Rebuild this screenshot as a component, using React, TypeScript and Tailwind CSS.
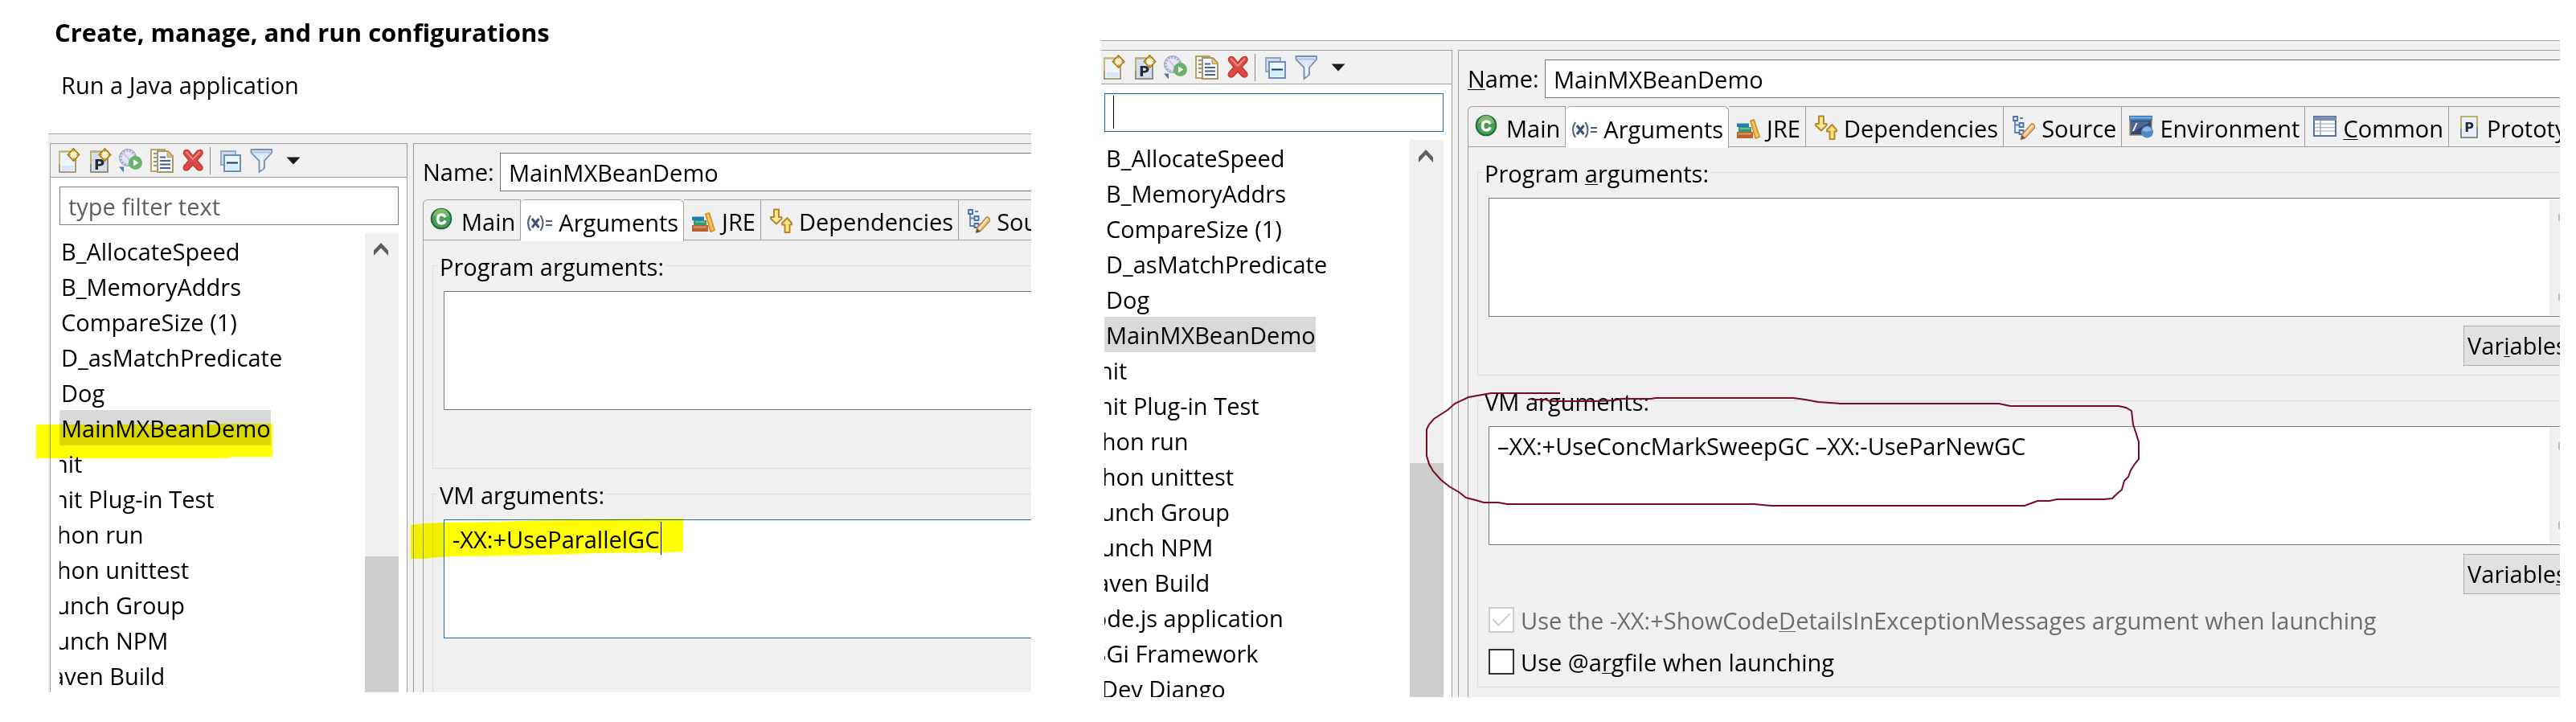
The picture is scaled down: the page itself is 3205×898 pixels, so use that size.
import React from "react";

/* ---------- toolbar icons ---------- */

type IconProps = { children: React.ReactNode };

function Icon({ children }: IconProps) {
  return (
    <svg viewBox="0 0 32 32" className="size-8 shrink-0" aria-hidden="true">
      {children}
    </svg>
  );
}

function Spark() {
  return (
    <g>
      <path d="M21.500 1 L28.500 8.500 L21.500 16 L14.500 8.500 Z" fill="#fdf3c8" stroke="#a67c12" strokeWidth="1.800" />
      <path d="M21.500 2 V15 M15.500 8.500 H27.500" stroke="#c99b2c" strokeWidth="1.600" />
      <path d="M21.500 5 V12 M18 8.500 H25" stroke="#fffbe6" strokeWidth="2.200" />
    </g>
  );
}

function NewIcon() {
  return (
    <Icon>
      <path d="M4 4.500 H24 V30 H4 Z" fill="#eef4fc" stroke="#a79d78" strokeWidth="2" />
      <path d="M4 4.500 V20 M4 4.500 H16" stroke="#cdbb79" strokeWidth="2" />
      <path d="M7 22 H22 V28 H7 Z" fill="#d8e6f8" />
      <Spark />
    </Icon>
  );
}

function PrototypeNewIcon() {
  return (
    <Icon>
      <path d="M4 4.500 H25 V30 H4 Z" fill="#d3deee" stroke="#948f78" strokeWidth="2" />
      <path d="M4 4.500 V20 M4 4.500 H16" stroke="#c2b172" strokeWidth="2" />
      <text x="8" y="27" fontFamily="DejaVu Sans, sans-serif" fontWeight="700" fontSize="18" fill="#26292e">P</text>
      <Spark />
    </Icon>
  );
}

function ExportIcon() {
  return (
    <Icon>
      <circle cx="11" cy="12" r="9" fill="#e6e4f2" stroke="#a9b5d2" strokeWidth="3.500" strokeDasharray="2.600 1.400" />
      <circle cx="11" cy="12" r="10.500" fill="none" stroke="#8fa2c8" strokeWidth="1" />
      <path d="M11 12 L6 7 M11 12 L15 20" stroke="#c8b9d6" strokeWidth="1.500" />
      <circle cx="20.500" cy="18.500" r="8.500" fill="#69b26c" />
      <path d="M18 14.500 L24.500 18.500 L18 22.500 Z" fill="#fff" />
      <path d="M0 23.500 H6 V30.500 Z" fill="#5878a8" />
    </Icon>
  );
}

function CopyIcon() {
  return (
    <Icon>
      <path d="M1 2 H18 V29 H1 Z" fill="#fbf6e0" stroke="#b6a468" strokeWidth="2" />
      <path d="M4 7 H8 M4 12 H8 M4 17 H8 M4 22 H8" stroke="#5b7295" strokeWidth="1.600" />
      <path d="M9 4 H22 L28 10.500 V30 H9 Z" fill="#f5f8fe" stroke="#a69668" strokeWidth="2" />
      <path d="M21 3.500 V11.500 H28.500 Z" fill="#e3c47a" stroke="#b79a55" strokeWidth="1" />
      <path d="M12 11.500 H19 M12 16 H25 M12 20.500 H25 M12 25 H25" stroke="#49628b" strokeWidth="1.800" />
    </Icon>
  );
}

function DeleteIcon() {
  return (
    <Icon>
      <path
        d="M4 3 Q7 1.500 9.500 4 L14 10 L19 4 Q22 1.500 25 3 Q27.500 6 25 9 L19 15.500 L25 22 Q27.500 25.500 24.500 27.500 Q21.500 29 19 26.500 L14 21 L9 26.500 Q6.500 29 3.500 27.500 Q1 25 3 22 L9 15.500 L3.500 9 Q1 5.500 4 3 Z"
        fill="#dc4a45"
        stroke="#c3312e"
        strokeWidth="1.200"
      />
      <path d="M5 4.500 L14 14 L23 4.500" fill="none" stroke="#ef8b84" strokeWidth="2" />
    </Icon>
  );
}

function CollapseIcon() {
  return (
    <Icon>
      <path d="M4 4 H22 V21 H4 Z" fill="#cfdcea" stroke="#8ea6c3" strokeWidth="1.800" />
      <path d="M8 9 H28 V29 H8 Z" fill="#eef7fe" stroke="#6e8fb5" strokeWidth="2" />
      <path d="M10 20 H26 V27 H10 Z" fill="#d5edfb" />
      <path d="M11 18.500 H25" stroke="#12385e" strokeWidth="2" />
    </Icon>
  );
}

function FilterIcon() {
  return (
    <Icon>
      <path d="M2.500 2 H28 V6 L19 16 V25 L12.500 30 V16 L2.500 6 Z" fill="#d7e9f8" stroke="#7790ae" strokeWidth="1.800" />
      <path d="M4 5.500 H26" stroke="#a9c6e2" strokeWidth="2" />
      <path d="M15.500 10 V27" stroke="#f6fbff" strokeWidth="2" />
    </Icon>
  );
}

function MenuArrowIcon() {
  return (
    <Icon>
      <path d="M7.500 11.500 H24.500 L16 20.500 Z" fill="#1c1c1c" />
    </Icon>
  );
}

/* ---------- tab icons ---------- */

function ClassIcon() {
  return (
    <Icon>
      <circle cx="15" cy="14" r="12.300" fill="#4b9c55" stroke="#1f6b39" strokeWidth="2" />
      <path d="M5 11.500 A10 10 0 0 1 25 11.500 Q15 8 5 11.500 Z" fill="#7bb86c" />
      <text x="15" y="20.500" textAnchor="middle" fontFamily="Liberation Sans, sans-serif" fontWeight="700" fontSize="18" fill="#fff" stroke="#fff" strokeWidth="1">C</text>
    </Icon>
  );
}

function ArgumentsIcon() {
  return (
    <Icon>
      <path d="M5 9 Q-1 18.500 5 28 M17.500 9 Q23.500 18.500 17.500 28" fill="none" stroke="#5a6580" strokeWidth="2.200" />
      <path d="M7 13 L15.500 24 M15.500 13 L7 24" stroke="#3c4f7a" strokeWidth="3" />
      <path d="M24 16 H32 M24 21 H32" stroke="#4d5a7c" strokeWidth="2" />
    </Icon>
  );
}

function LibraryIcon() {
  return (
    <Icon>
      <path d="M3 11.500 H18 V16 H3 Z" fill="#1f7fae" />
      <path d="M5 16 H21 V22 H5 Z" fill="#2f9c74" />
      <path d="M7 18 H19" stroke="#7cc9a4" strokeWidth="1.500" />
      <path d="M3 22 H23 V30 H3 Z" fill="#b9622f" />
      <path d="M5 24.500 H21" stroke="#dc9a68" strokeWidth="2" />
      <path d="M19.500 8 L24.500 6.500 L31.500 28.500 L26 30.500 Z" fill="#eda72f" stroke="#cf7f1c" strokeWidth="1" />
      <path d="M22.500 9 L28.500 28" stroke="#f8d276" strokeWidth="1.600" />
    </Icon>
  );
}

function DependenciesIcon() {
  return (
    <Icon>
      <path d="M9 2.500 H15 V12 H18.500 V14 L12 20.500 L5 14 V12 H9 Z" fill="#fbe795" stroke="#b8872a" strokeWidth="2" strokeLinejoin="round" />
      <path d="M22.500 31 H28.500 V21.500 H31 V19.500 L25.500 13 L19 19.500 V21.500 H22.500 Z" fill="#fbe27c" stroke="#b8872a" strokeWidth="2" strokeLinejoin="round" />
    </Icon>
  );
}

function SourceIcon() {
  return (
    <Icon>
      <path d="M7 8 V23 H12 M7 13.500 H12 M13 5 H17" fill="none" stroke="#5e80b4" strokeWidth="1.800" />
      <path d="M5 3 H10 V8 H5 Z M12.500 11 H17.500 V16 H12.500 Z M12.500 20 H17.500 V25 H12.500 Z" fill="#dfe9f7" stroke="#4a70aa" strokeWidth="1.800" />
      <path d="M28 11.500 Q32.500 13 31.500 17 L20.500 29 L14.500 31.500 L15.500 25.500 Z" fill="#f0b877" stroke="#b67b42" strokeWidth="1.200" />
      <path d="M28.500 14 L18 27" stroke="#fbe3bd" strokeWidth="2" />
      <path d="M15.500 26 L20 30 L14 31.500 Z" fill="#6d5648" />
    </Icon>
  );
}

function EnvironmentIcon() {
  return (
    <Icon>
      <path d="M3 2.500 H30 V26 H3 Z" fill="#2f4570" stroke="#a08e5c" strokeWidth="1.400" />
      <path d="M2 2 H31 V8 H2 Z" fill="#3f7fb9" />
      <path d="M3 4.500 H30" stroke="#86bce6" strokeWidth="1.600" />
      <path d="M4 9 H29 L4 24 Z" fill="#4d6796" />
      <path d="M11.500 11 L7 21" stroke="#fff" strokeWidth="1.800" />
      <circle cx="24.500" cy="22" r="7.500" fill="#4f8cc4" />
      <path d="M18 20 Q24.500 11 31 20 Q24.500 23 18 20 Z" fill="#8ab6de" />
    </Icon>
  );
}

function CommonIcon() {
  return (
    <Icon>
      <path d="M4 3 H31 V27 H4 Z" fill="#fbfcfe" stroke="#5d6f95" strokeWidth="2" />
      <path d="M4 3 H31 V8 H4 Z" fill="#7d8fb3" />
      <path d="M5 12 H30 M5 16.500 H30 M5 21 H30" stroke="#b9bec9" strokeWidth="1.600" />
      <path d="M12 8 V26" stroke="#9aa6bd" strokeWidth="1.400" />
    </Icon>
  );
}

function PrototypeIcon() {
  return (
    <Icon>
      <path d="M8 3 H28 V29 H8 Z" fill="#e9f0fb" stroke="#8e8f86" strokeWidth="2" />
      <path d="M8 18 V3 H28 V16" fill="none" stroke="#bfae6e" strokeWidth="2" />
      <text x="18" y="22" textAnchor="middle" fontFamily="DejaVu Sans, sans-serif" fontWeight="700" fontSize="16" fill="#26292e">P</text>
    </Icon>
  );
}

/* ---------- shared pieces ---------- */

/** Renders a caption whose mnemonic stands between two ampersands. */
function Mnemonic({ text, show }: { text: string; show: boolean }) {
  const [before, key, after] = text.split("&");
  return (
    <>
      {before}
      <span className={show ? "underline decoration-1 underline-offset-2" : ""}>{key}</span>
      {after}
    </>
  );
}

const launchItems = [
  { name: "B_AllocateSpeed", child: true },
  { name: "B_MemoryAddrs", child: true },
  { name: "CompareSize (1)", child: true },
  { name: "D_asMatchPredicate", child: true },
  { name: "Dog", child: true },
  { name: "MainMXBeanDemo", child: true, selected: true },
  { name: "JUnit" },
  { name: "JUnit Plug-in Test" },
  { name: "Jython run" },
  { name: "Jython unittest" },
  { name: "Launch Group" },
  { name: "Launch NPM" },
  { name: "Maven Build" },
  { name: "Node.js application" },
  { name: "OSGi Framework" },
  { name: "PyDev Django" },
];

const tools = [
  { label: "New launch configuration", icon: <NewIcon /> },
  { label: "New launch configuration prototype", icon: <PrototypeNewIcon /> },
  { label: "Export launch configuration", icon: <ExportIcon /> },
  { label: "Duplicate", icon: <CopyIcon /> },
  { label: "Delete", icon: <DeleteIcon /> },
];

const viewTools = [
  { label: "Collapse all", icon: <CollapseIcon /> },
  { label: "Filter", icon: <FilterIcon /> },
  { label: "Filter menu", icon: <MenuArrowIcon /> },
];

const tabs = [
  { text: "&&Main", icon: <ClassIcon /> },
  { text: "&&Arguments", icon: <ArgumentsIcon />, active: true },
  { text: "&&JRE", icon: <LibraryIcon /> },
  { text: "&&Dependencies", icon: <DependenciesIcon /> },
  { text: "&&Source", icon: <SourceIcon /> },
  { text: "&&Environment", icon: <EnvironmentIcon /> },
  { text: "&C&ommon", icon: <CommonIcon /> },
  { text: "&&Prototype", icon: <PrototypeIcon /> },
];

function ToolButton({ label, icon }: { label: string; icon: React.ReactNode }) {
  return (
    <button type="button" aria-label={label} className="size-8">
      {icon}
    </button>
  );
}

function LaunchList({ searching }: { searching: boolean }) {
  return (
    <section
      className={`flex w-[445px] shrink-0 flex-col border border-b-0 border-[#a0a0a0] ${searching ? "-ml-2" : "ml-0.5"}`}
    >
      <div className="flex h-[42px] shrink-0 items-center border-b border-[#a0a0a0] pl-[7px]">
        <div className="flex gap-[7px]">
          {tools.map((t) => (
            <ToolButton key={t.label} {...t} />
          ))}
        </div>
        <div className="ml-[3px] h-[34px] w-px bg-[#8a8a8a]" />
        <div className="ml-[9px] flex gap-[7px]">
          {viewTools.map((t) => (
            <ToolButton key={t.label} {...t} />
          ))}
        </div>
      </div>
      <div className="flex grow flex-col gap-2.5 bg-white pt-[11px] pr-2.5 pl-[11px]">
        <div className="relative shrink-0">
          <input
            type="text"
            aria-label="Filter launch configurations"
            placeholder={searching ? "" : "type filter text"}
            className={`block h-12 w-full border bg-white px-2.5 placeholder:text-[#5f5f5f] ${searching ? "border-[#1c6ea8]" : "border-[#7a7a7a]"}`}
          />
          {searching && <span className="absolute top-[3px] left-[11px] h-[41px] w-px bg-black" />}
        </div>
        <div className="flex h-0 grow overflow-hidden">
          <ul className="min-w-0 grow overflow-hidden">
            {launchItems.map((item) => (
              <li key={item.name} className={`flex h-11 whitespace-nowrap ${item.child ? "" : "-ml-[38px]"}`}>
                <span className={`pl-0.5 leading-[46px] ${item.selected ? "bg-[#d9d9d9]" : ""}`}>{item.name}</span>
              </li>
            ))}
          </ul>
          <div className="flex w-[42px] shrink-0 flex-col bg-[#f0f0f0]">
            <svg viewBox="0 0 42 40" className="h-10 w-full shrink-0" aria-hidden="true">
              <path d="M11 21.500 L20 12 L29 21.500 V28 L20 18.500 L11 28 Z" fill="#606060" />
            </svg>
            <div className="mt-[362px] grow bg-[#cdcdcd]" />
          </div>
        </div>
      </div>
    </section>
  );
}

type ArgumentsGroupProps = {
  id: string;
  caption: string;
  button: string;
  value?: string;
  focused?: boolean;
  full: boolean;
  closed?: boolean;
  children?: React.ReactNode;
};

function ArgumentsGroup({ id, caption, button, value = "", focused, full, closed = true, children }: ArgumentsGroupProps) {
  return (
    <fieldset
      className={`mt-[9px] min-w-0 border border-r-0 border-[#dcdcdc] pl-1.5 ${closed ? "" : "grow border-b-0"}`}
    >
      <legend className="px-0.5 pt-1 leading-10">
        <label htmlFor={id}>
          <Mnemonic text={caption} show={full} />
        </label>
      </legend>
      <div className="pt-2.5 pl-[7px]">
        <div className={`relative flex h-[148px] border border-r-0 bg-white ${focused ? "border-[#1c6ea8]" : "border-[#7a7a7a]"}`}>
          <textarea
            id={id}
            defaultValue={value}
            spellCheck={false}
            className="min-w-0 grow resize-none overflow-hidden bg-white px-2.5 pt-0.5 leading-11 outline-none"
          />
          {focused && <span className="absolute top-0.5 left-[269px] h-[41px] w-px bg-black" />}
          {full && (
            <div className="my-px flex w-[13px] shrink-0 flex-col items-end justify-between bg-[#f0f0f0] py-[18px]">
              <span className="h-[9px] w-0.5 bg-[#bfbfbf]" />
              <span className="h-[9px] w-0.5 bg-[#bfbfbf]" />
            </div>
          )}
        </div>
        <div className={`flex items-start justify-end pt-[11px] ${closed ? "h-[72px]" : "h-[67px]"}`}>
          {full && (
            <button
              type="button"
              className="-mr-10 h-[50px] w-40 shrink-0 border border-[#adadad] bg-[#e1e1e1] pl-1 text-left"
            >
              <Mnemonic text={button} show />
            </button>
          )}
        </div>
        {children}
      </div>
    </fieldset>
  );
}

type EditorProps = { id: string; full: boolean; vmArguments: string };

function Editor({ id, full, vmArguments }: EditorProps) {
  return (
    <section className="ml-[7px] flex min-w-0 grow flex-col overflow-hidden border-t border-l border-[#a0a0a0] pt-[11px] pl-[11px]">
      <div className="flex">
        <label htmlFor={`${id}-name`} className="w-24 shrink-0 leading-[48px]">
          <Mnemonic text="&N&ame:" show={full} />
        </label>
        <input
          id={`${id}-name`}
          type="text"
          defaultValue="MainMXBeanDemo"
          className="h-12 min-w-0 grow border border-r-0 border-[#7a7a7a] bg-white px-2.5"
        />
      </div>
      <div className="mt-2.5 flex grow flex-col rounded-tl-md border-l border-[#a0a0a0]">
        <div role="tablist" className="flex h-[51px] overflow-visible">
          {tabs.map((t, i) => (
            <button
              key={t.text}
              type="button"
              role="tab"
              aria-selected={Boolean(t.active)}
              className={`flex shrink-0 items-center gap-2 border-t border-r border-[#a0a0a0] pr-1.5 pl-[7px] whitespace-nowrap ${
                t.active ? "relative -mb-px h-[52px] rounded-t-md bg-white" : "h-[51px] border-b"
              } ${i === 0 ? "rounded-tl-md" : ""}`}
            >
              {t.icon}
              <span className="pt-1">
                <Mnemonic text={t.text} show={full} />
              </span>
            </button>
          ))}
          <div className="grow border-t border-b border-[#a0a0a0]" />
        </div>
        <div className={`flex grow flex-col pl-[11px] ${full ? "pb-3" : ""}`}>
          <ArgumentsGroup id={`${id}-program`} caption="Program &a&rguments:" button="Var&i&ables..." full={full} />
          <ArgumentsGroup
            id={`${id}-vm`}
            caption="VM ar&g&uments:"
            button="Variable&s&..."
            value={vmArguments}
            focused={!full}
            closed={full}
            full={full}
          >
            {full && (
              <div className="flex flex-col gap-5 pt-[5px] pb-[15px] whitespace-nowrap">
                <label className="flex h-8 items-center gap-2 text-[#6d6d6d]">
                  <span className="relative flex size-8 shrink-0">
                    <input type="checkbox" defaultChecked disabled className="size-8 appearance-none border-2 border-[#cccccc] bg-white" />
                    <svg viewBox="0 0 32 32" className="absolute inset-0" aria-hidden="true">
                      <path d="M5.500 15.500 L12.500 22.500 L27 8" fill="none" stroke="#cccccc" strokeWidth="2" />
                    </svg>
                  </span>
                  <span className="pt-0.5">
                    <Mnemonic text="Use the -XX:+ShowCode&D&etailsInExceptionMessages argument when launching" show />
                  </span>
                </label>
                <label className="flex h-8 items-center gap-2">
                  <input type="checkbox" className="size-8 shrink-0 appearance-none border-2 border-[#333333] bg-white" />
                  <span className="pt-0.5">
                    <Mnemonic text="Use @a&r&gfile when launching" show />
                  </span>
                </label>
              </div>
            )}
          </ArgumentsGroup>
        </div>
      </div>
    </section>
  );
}

function ConfigurationWindow({ id, full, vmArguments }: EditorProps) {
  return (
    <div className="flex overflow-hidden border-t border-[#a0a0a0] bg-[#f0f0f0] pt-[11px]">
      <LaunchList searching={full} />
      <Editor id={id} full={full} vmArguments={vmArguments} />
    </div>
  );
}

export default function App() {
  return (
    <main className="flex min-h-screen items-start gap-[87px] bg-white pr-5 pl-[60px] font-['Open_Sans','Noto_Sans',sans-serif] text-[29px] leading-[40px] text-black">
      <article className="relative min-w-0 flex-[1223_1_0px]">
        <header className="flex flex-col gap-[22px] pt-[18px] pb-[38px] whitespace-nowrap">
          <h1 className="pl-2 text-[31px] leading-11 font-bold">Create, manage, and run configurations</h1>
          <p className="pl-4 leading-11">Run a Java application</p>
        </header>
        <ConfigurationWindow id="parallel" full={false} vmArguments="-XX:+UseParallelGC" />
        <svg viewBox="0 0 294 43" className="pointer-events-none absolute top-[527px] -left-[15px] h-[43px] w-[294px] mix-blend-multiply" aria-hidden="true">
          <path d="M0 1 H226 V0 H294 V41.500 H239 V43 H0 Z" fill="#ffff00" />
        </svg>
        <svg viewBox="0 0 340 52" className="pointer-events-none absolute top-[644px] left-[451px] h-[52px] w-[340px] mix-blend-multiply" aria-hidden="true">
          <path d="M0 9 L18 7 L38 6 L111 5 L162 3 L240 2 L312 1 H339 V42 L327 43 L230 44 L178 46 L126 47 L52 48 L22 50 V51 H0 Z" fill="#ffff00" />
        </svg>
      </article>
      <article className="relative min-w-0 flex-[1815_1_0px] pt-[50px]">
        <ConfigurationWindow id="concurrent" full vmArguments="–XX:+UseConcMarkSweepGC –XX:-UseParNewGC" />
        <svg viewBox="1770 480 900 160" className="pointer-events-none absolute top-[480px] left-[400px] h-[160px] w-[900px]" aria-hidden="true">
          <path
            d="M1941 489 H1855 L1827 494 L1810 502 L1801 510 L1784 521 L1778 528 L1775 534 V567 L1778 577 L1783 586 L1793 597 L1803 605 L1815 612 L1824 619 L1836 622 L1846 625 L1864 625 L1875 627 H2182 L2204 629 H2519 L2527 626 L2535 623 L2550 623 L2559 621 H2617 L2628 620 L2634 614 L2640 609 L2643 598 L2648 593 L2651 585 L2656 577 L2661 571 V550 L2658 540 L2654 528 L2652 511 L2645 507 L2636 505 H2501 L2487 502 H2290 L2262 500 L2246 497 L2231 495 H2060 L2054 496 H2017 L2008 498 L1983 499 H1928 L1924 497 H1906"
            fill="none"
            stroke="#780c20"
            strokeWidth="2"
          />
        </svg>
      </article>
    </main>
  );
}
